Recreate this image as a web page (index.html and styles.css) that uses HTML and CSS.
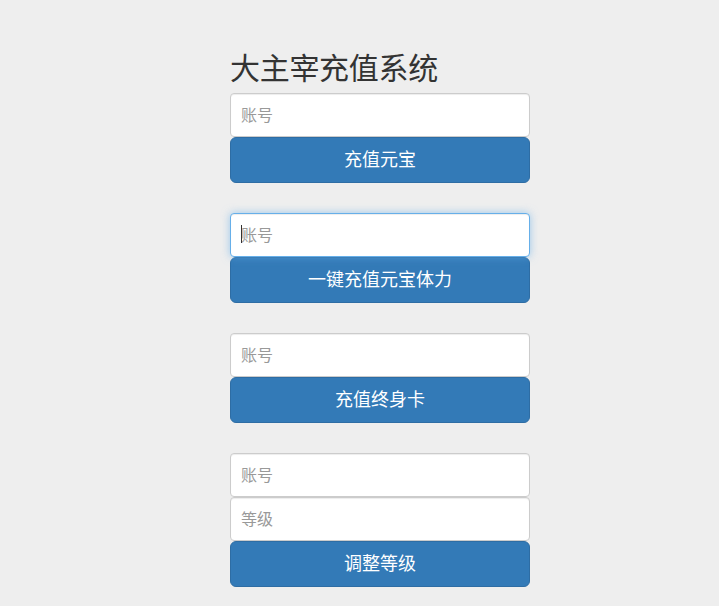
FILE: index.html
```html
<!DOCTYPE html>
<html lang="zh-CN">
<head>
<meta charset="utf-8">
<title>大主宰充值系统</title>
<link rel="stylesheet" href="styles.css">
</head>
<body>
<div class="page">
  <h2 class="title">大主宰充值系统</h2>
  <form class="group">
    <input class="field" type="text" placeholder="账号">
    <button class="btn" type="button">充值元宝</button>
  </form>
  <form class="group">
    <div class="field-wrap">
      <input class="field focused" type="text" placeholder="账号">
      <span class="caret"></span>
    </div>
    <button class="btn" type="button">一键充值元宝体力</button>
  </form>
  <form class="group">
    <input class="field" type="text" placeholder="账号">
    <button class="btn" type="button">充值终身卡</button>
  </form>
  <form class="group">
    <input class="field" type="text" placeholder="账号">
    <input class="field" type="text" placeholder="等级">
    <button class="btn" type="button">调整等级</button>
  </form>
</div>
</body>
</html>
```
FILE: styles.css
```css
* { box-sizing: border-box; }
html, body {
  margin: 0;
  padding: 0;
  background: #eeeeee;
  font-family: "Liberation Sans", "Noto Sans CJK SC", sans-serif;
  color: #333333;
}
.page {
  width: 300px;
  margin-left: 230px;
  padding-top: 50px;
}
.title {
  margin: 0 0 10px 0;
  font-size: 30px;
  line-height: 33px;
  font-weight: 400;
  font-family: "Noto Sans CJK SC", sans-serif;
  color: #333333;
  letter-spacing: -0.3px;
}
.group {
  display: flex;
  flex-direction: column;
  margin: 0 0 30px 0;
}
.field-wrap {
  position: relative;
  display: flex;
  flex-direction: column;
}
.field {
  display: block;
  width: 300px;
  height: 44px;
  margin: 0;
  padding: 0 10px 3px 10px;
  font-size: 16px;
  font-family: "Noto Sans CJK SC", sans-serif;
  color: #555555;
  background: #ffffff;
  border: 1px solid #cccccc;
  border-radius: 4px;
  box-shadow: inset 0 1px 1px rgba(0,0,0,0.075);
  outline: none;
}
.field::placeholder { color: #999999; }
.field.focused {
  border-color: #66afe9;
  box-shadow: inset 0 1px 1px rgba(0,0,0,0.075), 0 0 8px rgba(102,175,233,0.6);
}
.caret {
  position: absolute;
  left: 11px;
  top: 12px;
  width: 1px;
  height: 18px;
  background: #333333;
}
.btn {
  display: block;
  width: 300px;
  height: 46px;
  margin: 0;
  padding: 0 0 4px 0;
  font-size: 18px;
  font-family: "Noto Sans CJK SC", sans-serif;
  color: #ffffff;
  background: #337ab7;
  border: 1px solid #2e6da4;
  border-radius: 6px;
  cursor: pointer;
}
```
